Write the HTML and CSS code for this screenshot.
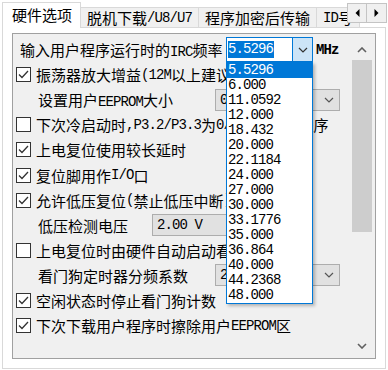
FILE: index.html
```html
<!DOCTYPE html>
<html lang="zh-CN">
<head>
<meta charset="utf-8">
<title>硬件选项</title>
<link rel="stylesheet" href="styles.css">
</head>
<body>
<div class="tabstrip">
  <div class="tab active">硬件选项</div>
  <div class="tab">脱机下载<span class="a">/U8/U7</span></div>
  <div class="tab">程序加密后传输</div>
  <div class="tab"><span class="a">ID</span>号</div>
  <div class="tabnav">
    <div class="nb"><svg width="5" height="8" viewBox="0 0 5 8"><polygon points="4.5,0 0.5,4 4.5,8" fill="#000"/></svg></div>
    <div class="nb"><svg width="5" height="8" viewBox="0 0 5 8"><polygon points="0.5,0 4.5,4 0.5,8" fill="#000"/></svg></div>
  </div>
</div>
<div class="page">
  <div class="panel">
    <div class="content">
      <div class="row first">
        <span class="lbl w-first">输入用户程序运行时的<span class="a">IRC</span>频率</span>
        <div class="combo focus">
          <div class="val"><span class="sel a">5.5296</span></div>
          <div class="btn"><svg width="10" height="6" viewBox="0 0 10 6"><polyline points="1,1 5,5 9,1" fill="none" stroke="#333" stroke-width="1.2"/></svg></div>
          <ul class="list">
            <li class="on a">5.5296</li>
            <li class="a">6.000</li>
            <li class="a">11.0592</li>
            <li class="a">12.000</li>
            <li class="a">18.432</li>
            <li class="a">20.000</li>
            <li class="a">22.1184</li>
            <li class="a">24.000</li>
            <li class="a">27.000</li>
            <li class="a">30.000</li>
            <li class="a">33.1776</li>
            <li class="a">35.000</li>
            <li class="a">36.864</li>
            <li class="a">40.000</li>
            <li class="a">44.2368</li>
            <li class="a">48.000</li>
          </ul>
        </div>
        <span class="mhz a">MHz</span>
      </div>
      <div class="row cb"><span class="box"><svg width="13" height="13" viewBox="0 0 13 13"><polyline points="2,6.5 5,9.5 11,3" fill="none" stroke="#333" stroke-width="1.3"/></svg></span>振荡器放大增益<span class="a">(12M</span>以上建议选择<span class="a">)</span></div>
      <div class="row ind">
        <span class="lbl w-long">设置用户<span class="a">EEPROM</span>大小</span>
        <div class="gcombo wide"><span class="gv a">0 K</span><span class="garr"><svg width="10" height="6" viewBox="0 0 10 6"><polyline points="1,1 5,5 9,1" fill="none" stroke="#555" stroke-width="1.2"/></svg></span></div>
      </div>
      <div class="row cb"><span class="box"></span>下次冷启动时<span class="a">,P3.2/P3.3</span>为<span class="a">0/0</span>才可下载程序</div>
      <div class="row cb"><span class="box"><svg width="13" height="13" viewBox="0 0 13 13"><polyline points="2,6.5 5,9.5 11,3" fill="none" stroke="#333" stroke-width="1.3"/></svg></span>上电复位使用较长延时</div>
      <div class="row cb"><span class="box"><svg width="13" height="13" viewBox="0 0 13 13"><polyline points="2,6.5 5,9.5 11,3" fill="none" stroke="#333" stroke-width="1.3"/></svg></span>复位脚用作<span class="a">I/O</span>口</div>
      <div class="row cb"><span class="box"><svg width="13" height="13" viewBox="0 0 13 13"><polyline points="2,6.5 5,9.5 11,3" fill="none" stroke="#333" stroke-width="1.3"/></svg></span>允许低压复位<span class="a">(</span>禁止低压中断<span class="a">)</span></div>
      <div class="row ind">
        <span class="lbl w-short">低压检测电压</span>
        <div class="gcombo narrow"><span class="gv a">2.00 V</span><span class="garr"><svg width="10" height="6" viewBox="0 0 10 6"><polyline points="1,1 5,5 9,1" fill="none" stroke="#555" stroke-width="1.2"/></svg></span></div>
      </div>
      <div class="row cb"><span class="box"></span>上电复位时由硬件自动启动看门狗</div>
      <div class="row ind">
        <span class="lbl w-long">看门狗定时器分频系数</span>
        <div class="gcombo wide"><span class="gv a">256</span><span class="garr"><svg width="10" height="6" viewBox="0 0 10 6"><polyline points="1,1 5,5 9,1" fill="none" stroke="#555" stroke-width="1.2"/></svg></span></div>
      </div>
      <div class="row cb"><span class="box"><svg width="13" height="13" viewBox="0 0 13 13"><polyline points="2,6.5 5,9.5 11,3" fill="none" stroke="#333" stroke-width="1.3"/></svg></span>空闲状态时停止看门狗计数</div>
      <div class="row cb"><span class="box"><svg width="13" height="13" viewBox="0 0 13 13"><polyline points="2,6.5 5,9.5 11,3" fill="none" stroke="#333" stroke-width="1.3"/></svg></span>下次下载用户程序时擦除用户<span class="a">EEPROM</span>区</div>
    </div>
    <div class="vscroll">
      <div class="sb-up"><svg width="10" height="6" viewBox="0 0 10 6"><polyline points="1,5 5,1 9,5" fill="none" stroke="#606060" stroke-width="1.6"/></svg></div>
      <div class="thumb"></div>
      <div class="sb-down"><svg width="10" height="6" viewBox="0 0 10 6"><polyline points="1,1 5,5 9,1" fill="none" stroke="#606060" stroke-width="1.6"/></svg></div>
    </div>
  </div>
</div>
</body>
</html>
```
FILE: styles.css
```css
* { box-sizing: border-box; }

body {
  margin: 0;
  width: 388px;
  height: 370px;
  overflow: hidden;
  background: #ffffff;
  color: #000;
  font-family: "Noto Sans CJK SC", sans-serif;
  font-size: 15px;
}

.a {
  font-family: "Liberation Mono", monospace;
  font-size: 14px;
  letter-spacing: -0.9px;
}

/* tabs */
.tabstrip {
  position: relative;
  z-index: 2;
  display: flex;
  align-items: flex-start;
  height: 28px;
  padding-left: 2px;
  overflow: hidden;
  white-space: nowrap;
}

.tab {
  margin-top: 7px;
  height: 20px;
  padding: 0 6px;
  display: flex;
  align-items: center;
  background: #f0f0f0;
  border: 1px solid #d9d9d9;
  border-left: none;
  border-bottom: none;
  line-height: 1;
}

.tab.active {
  margin-top: 2px;
  height: 26px;
  padding: 0 8px 2px 9px;
  background: #ffffff;
  border-left: 1px solid #d9d9d9;
}

.tabnav {
  position: absolute;
  left: 347px;
  top: 3px;
  display: flex;
  background: #f0f0f0;
}

.nb {
  width: 20px;
  height: 20px;
  display: flex;
  align-items: center;
  justify-content: center;
  border: 1px solid #c4c4c4;
  background: #f0f0f0;
}
.nb + .nb { border-left: none; }

/* page */
.page {
  position: relative;
  z-index: 1;
  margin: -1px 2px 0;
  height: 342px;
  padding: 5px 9px 9px 9px;
  background: #ffffff;
  border: 1px solid #d9d9d9;
}

.panel {
  height: 326px;
  display: flex;
  background: #f0f0f0;
  border: 1px solid #a0a0a0;
}

.content {
  flex: 1;
  min-width: 0;
  padding-top: 3px;
}

.row {
  height: 25.1px;
  display: flex;
  align-items: center;
  white-space: nowrap;
}
.row.first { padding-left: 7px; }
.row.cb { padding-left: 3px; }
.row.ind { padding-left: 25px; }

.lbl { flex: none; display: inline-block; }
.w-first { width: 206px; }
.w-long { width: 177px; }
.w-short { width: 114px; }

.box {
  flex: none;
  width: 15px;
  height: 15px;
  margin-right: 5px;
  background: #fff;
  border: 1px solid #333;
  display: flex;
  align-items: center;
  justify-content: center;
}

/* focused combo with open list */
.combo {
  position: relative;
  z-index: 5;
  flex: none;
  width: 87px;
  height: 25px;
  display: flex;
  background: #fff;
  border: 1px solid #0078d7;
}
.combo .val {
  flex: 1;
  display: flex;
  align-items: center;
  padding-left: 1px;
}
.combo .sel {
  display: inline-block;
  height: 17px;
  line-height: 17px;
  padding-right: 1px;
  background: #0078d7;
  color: #fff;
}
.combo .btn {
  width: 20px;
  display: flex;
  align-items: center;
  justify-content: center;
  background: #cce4f7;
  border-left: 1px solid #0078d7;
}

.list {
  position: absolute;
  left: -1px;
  top: 24px;
  width: 87px;
  margin: 0;
  padding: 0;
  list-style: none;
  background: #fff;
  border: 1px solid #0078d7;
  box-shadow: 2px 2px 3px rgba(0, 0, 0, 0.25);
}
.list li {
  height: 15px;
  line-height: 15px;
  padding-left: 1px;
}
.list li.on {
  background: #0078d7;
  color: #fff;
}

.mhz {
  margin-left: 3px;
  font-weight: bold;
}

/* grey combos */
.gcombo {
  flex: none;
  height: 22px;
  display: flex;
  align-items: center;
  background: #e1e1e1;
  border: 1px solid #adadad;
}
.gcombo.wide { width: 125px; }
.gcombo.narrow { width: 140px; }
.gv { flex: 1; padding-left: 4px; }
.garr {
  width: 20px;
  display: flex;
  justify-content: center;
}

/* scrollbar */
.vscroll {
  flex: none;
  width: 23px;
  display: flex;
  flex-direction: column;
  padding-right: 3px;
}
.sb-up {
  height: 26px;
  display: flex;
  align-items: flex-end;
  justify-content: center;
  padding-bottom: 7px;
}
.thumb {
  height: 172px;
  background: #cdcdcd;
}
.sb-down {
  margin-top: auto;
  height: 25px;
  display: flex;
  align-items: flex-start;
  justify-content: center;
  padding-top: 10px;
}
```
